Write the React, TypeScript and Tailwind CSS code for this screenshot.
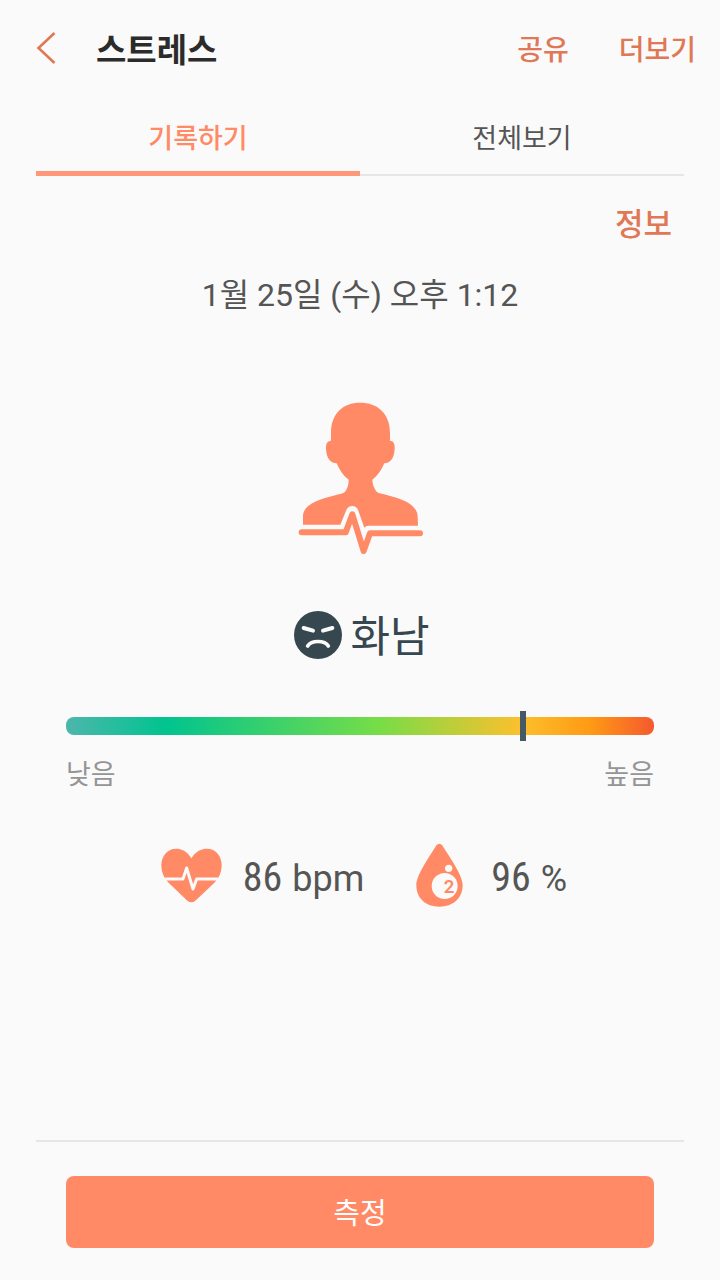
import { useState } from "react";

const FONT = "font-['Roboto','Noto_Sans_CJK_KR',sans-serif]";
const ACTION = "font-medium text-[#e07856]";

const TABS = [
  { id: "track", label: "기록하기" },
  { id: "trends", label: "전체보기" },
];

function BackIcon() {
  return (
    <svg viewBox="0 0 20 34" className="h-[34px] w-5" fill="none" stroke="#e07856" strokeWidth="2.6" aria-hidden="true">
      <path d="M18.5 1L2.5 16L18.5 31" />
    </svg>
  );
}

function BodyPulseIcon() {
  return (
    <svg viewBox="0 0 480 540" className="h-[180px] w-40" fill="#ff8a65" aria-hidden="true">
      <path d="M240 38C292 38 330 69 330 129V152C342 152 345 164 344 178C342 205 332 219 313 220C304 241 292 258 277 269C278 286 285 305 298 310C342 320 413 336 413 380L414 407H265Q257 407 253 413L235 362Q230 348 217 348Q204 348 199 360L181 404H69V378C69 336 145 322 188 310C200 305 206 286 206 269C190 258 179 241 170 220C150 219 140 205 138 178C137 164 140 153 153 152V129C153 69 190 38 240 38Z" />
      <path
        d="M65 427H197L217 373L251 483L270 430H420"
        fill="none"
        stroke="#ff8a65"
        strokeWidth="18"
        strokeLinecap="round"
        strokeLinejoin="round"
      />
    </svg>
  );
}

function AngryIcon() {
  return (
    <svg viewBox="0 0 144 144" className="size-12" fill="none" stroke="#fafafa" strokeLinecap="round" aria-hidden="true">
      <circle cx="72" cy="72" r="72" fill="#37474f" stroke="none" />
      <path d="M29 51L57 59M115 51L87 59" strokeWidth="12" />
      <path d="M41 105C52 87 92 87 103 105" strokeWidth="11" />
    </svg>
  );
}

function HeartIcon() {
  return (
    <svg viewBox="0 0 183 165" className="h-[55px] w-[61px]" aria-hidden="true">
      <path
        d="M91 31C104 9 122 2 138 2C164 2 182 24 182 51C182 78 170 96 150 114L103 158Q91 168 79 158L33 114C13 96 1 78 1 51C1 24 20 2 45 2C61 2 79 9 91 31Z"
        fill="#ff8a65"
      />
      <path d="M12 93H66L77 60L96 123L107 93H171" fill="none" stroke="#fafafa" strokeWidth="9" strokeLinejoin="round" />
    </svg>
  );
}

function OxygenIcon() {
  return (
    <svg viewBox="0 0 141 192" className="h-16 w-[47px]" aria-hidden="true">
      <path
        d="M61 7Q70 -2 79 7C92 31 140 94 140 126C140 166 111 191 70 191C29 191 1 166 1 126C1 94 48 31 61 7Z"
        fill="#ff8a65"
      />
      <circle cx="98" cy="76" r="11" fill="#fafafa" />
      <circle cx="86" cy="129" r="39" fill="#fafafa" />
      <text x="99" y="151" textAnchor="middle" fontSize="56" fontWeight="600" fill="#ff8a65">
        2
      </text>
    </svg>
  );
}

type MetricProps = {
  icon: React.ReactNode;
  value: number;
  unit: string;
};

function Metric({ icon, value, unit }: MetricProps) {
  return (
    <div className="flex items-center">
      <div className="flex w-[61px] justify-center">{icon}</div>
      <p className="ml-[21px] flex items-baseline gap-2.5 pt-1.5 text-[#555]">
        <span className="font-['Roboto_Condensed','Roboto',sans-serif] text-[40px] leading-[48px]">{value}</span>
        <span className="text-[36px] leading-[48px]">{unit}</span>
      </p>
    </div>
  );
}

export default function App() {
  const [tab, setTab] = useState("track");
  const [level, setLevel] = useState(78);

  return (
    <div className={`flex min-h-screen flex-col bg-[#fafafa] ${FONT}`}>
      <header className="flex h-[98px] items-center pl-9 pr-6">
        <button type="button" aria-label="뒤로">
          <BackIcon />
        </button>
        <h1 className="ml-10 pt-1 text-[33px] font-bold text-[#2b2b2b]">스트레스</h1>
        <div className={`ml-auto flex gap-[50px] pt-1 text-[28px] ${ACTION}`}>
          <button type="button">공유</button>
          <button type="button">더보기</button>
        </div>
      </header>

      <nav className="mx-9 grid h-[78px] grid-cols-2" role="tablist">
        {TABS.map((t) => (
          <button
            key={t.id}
            type="button"
            role="tab"
            aria-selected={tab === t.id}
            onClick={() => setTab(t.id)}
            className={`border-b-2 pt-1.5 text-[27px] ${
              tab === t.id
                ? "border-[#ff9779] font-medium text-[#ff8a65] shadow-[inset_0_-3px_0_#ff9779]"
                : "border-[#e6e6e6] text-[#555]"
            }`}
          >
            {t.label}
          </button>
        ))}
      </nav>

      <main className="flex flex-col items-center">
        <div className="flex h-[94px] w-full items-center justify-end pr-12 pt-1">
          <button type="button" className={`text-[31px] ${ACTION}`}>
            정보
          </button>
        </div>
        <p className="text-[32px] leading-[50px] text-[#555]">1월 25일 (수) 오후 1:12</p>

        <div className="mt-[70px]">
          <BodyPulseIcon />
        </div>

        <div className="mt-9 flex h-[58px] items-center gap-2 pl-1">
          <AngryIcon />
          <span className="pt-1 text-[43px] text-[#37474f]">화남</span>
        </div>

        <div className="mt-[47px] w-full px-[66px]">
          <input
            type="range"
            aria-label="스트레스"
            value={level}
            onChange={(e) => setLevel(Number(e.target.value))}
            className="block h-[30px] w-full appearance-none bg-transparent [&::-webkit-slider-runnable-track]:h-[18px] [&::-webkit-slider-runnable-track]:rounded-lg [&::-webkit-slider-runnable-track]:bg-[linear-gradient(to_right,#4db6ac_0%,#00c48f_17%,#76dd48_53%,#fbc02d_77%,#ff9b14_89%,#f4592f_100%)] [&::-webkit-slider-thumb]:-mt-1.5 [&::-webkit-slider-thumb]:h-[30px] [&::-webkit-slider-thumb]:w-1.5 [&::-webkit-slider-thumb]:appearance-none [&::-webkit-slider-thumb]:bg-[#455a64]"
          />
          <div className="mt-3.5 flex justify-between text-[27px] leading-10 text-[#959595]">
            <span>낮음</span>
            <span>높음</span>
          </div>
        </div>

        <div className="mt-10 flex h-20 items-center gap-[45px] pl-2">
          <Metric icon={<HeartIcon />} value={86} unit="bpm" />
          <Metric icon={<OxygenIcon />} value={96} unit="%" />
        </div>
      </main>

      <footer className="mx-9 mt-auto border-t-2 border-[#e6e6e6] px-[30px] pb-8 pt-[34px]">
        <button type="button" className="h-[72px] w-full rounded-lg bg-[#ff8a65] pt-1.5 text-[29px] text-white">
          측정
        </button>
      </footer>
    </div>
  );
}
